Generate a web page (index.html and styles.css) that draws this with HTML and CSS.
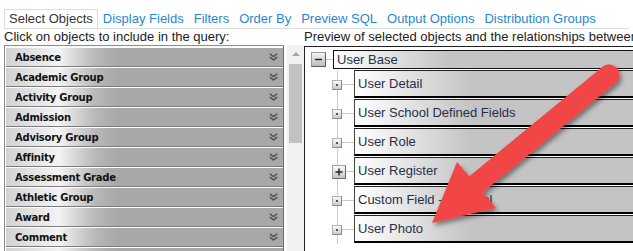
FILE: index.html
```html
<!DOCTYPE html>
<html>
  <head>
    <meta charset="utf-8">
    <meta name="viewport" content="width=device-width, initial-scale=1">

    <title>Query - Select Objects</title>
    <link rel="stylesheet" href="styles.css">
  </head>
  <body>

    <div class="tabs">
      <span class="tab active">Select Objects</span>
      <span class="tab">Display Fields</span>
      <span class="tab">Filters</span>
      <span class="tab">Order By</span>
      <span class="tab">Preview SQL</span>
      <span class="tab">Output Options</span>
      <span class="tab">Distribution Groups</span>
    </div>

    <div class="columns">

      <div class="left">
	<div class="label">Click on objects to include in the query:</div>
	<div class="list-wrap">
	  <div class="list">
	    <div class="obj">Absence<svg class="chev" width="9" height="8" viewBox="0 0 9 8"><path d="M0.8 0.8L4.5 3.6L8.2 0.8M0.8 4.2L4.5 7L8.2 4.2"/></svg></div>
	    <div class="obj">Academic Group<svg class="chev" width="9" height="8" viewBox="0 0 9 8"><path d="M0.8 0.8L4.5 3.6L8.2 0.8M0.8 4.2L4.5 7L8.2 4.2"/></svg></div>
	    <div class="obj">Activity Group<svg class="chev" width="9" height="8" viewBox="0 0 9 8"><path d="M0.8 0.8L4.5 3.6L8.2 0.8M0.8 4.2L4.5 7L8.2 4.2"/></svg></div>
	    <div class="obj">Admission<svg class="chev" width="9" height="8" viewBox="0 0 9 8"><path d="M0.8 0.8L4.5 3.6L8.2 0.8M0.8 4.2L4.5 7L8.2 4.2"/></svg></div>
	    <div class="obj">Advisory Group<svg class="chev" width="9" height="8" viewBox="0 0 9 8"><path d="M0.8 0.8L4.5 3.6L8.2 0.8M0.8 4.2L4.5 7L8.2 4.2"/></svg></div>
	    <div class="obj">Affinity<svg class="chev" width="9" height="8" viewBox="0 0 9 8"><path d="M0.8 0.8L4.5 3.6L8.2 0.8M0.8 4.2L4.5 7L8.2 4.2"/></svg></div>
	    <div class="obj">Assessment Grade<svg class="chev" width="9" height="8" viewBox="0 0 9 8"><path d="M0.8 0.8L4.5 3.6L8.2 0.8M0.8 4.2L4.5 7L8.2 4.2"/></svg></div>
	    <div class="obj">Athletic Group<svg class="chev" width="9" height="8" viewBox="0 0 9 8"><path d="M0.8 0.8L4.5 3.6L8.2 0.8M0.8 4.2L4.5 7L8.2 4.2"/></svg></div>
	    <div class="obj">Award<svg class="chev" width="9" height="8" viewBox="0 0 9 8"><path d="M0.8 0.8L4.5 3.6L8.2 0.8M0.8 4.2L4.5 7L8.2 4.2"/></svg></div>
	    <div class="obj">Comment<svg class="chev" width="9" height="8" viewBox="0 0 9 8"><path d="M0.8 0.8L4.5 3.6L8.2 0.8M0.8 4.2L4.5 7L8.2 4.2"/></svg></div>
	    <div class="obj">Conduct<svg class="chev" width="9" height="8" viewBox="0 0 9 8"><path d="M0.8 0.8L4.5 3.6L8.2 0.8M0.8 4.2L4.5 7L8.2 4.2"/></svg></div>
	  </div>
	  <div class="scrollbar">
	    <span class="up"></span>
	    <span class="thumb"></span>
	  </div>
	</div>
      </div>

      <div class="right">
	<div class="label">Preview of selected objects and the relationships between them:</div>
	<div class="preview">

	  <div class="root">
	    <span class="minus"><svg width="13" height="13" viewBox="0 0 13 13"><path d="M3 6.5H10"/></svg></span>
	    <span class="link"></span>
	    <div class="box">User Base</div>
	  </div>

	  <div class="children">
	    <div class="child">
	      <span class="branch"><span class="dot"></span><span class="hline"></span></span>
	      <div class="box">User Detail</div>
	    </div>
	    <div class="child">
	      <span class="branch"><span class="dot"></span><span class="hline"></span></span>
	      <div class="box">User School Defined Fields</div>
	    </div>
	    <div class="child">
	      <span class="branch"><span class="dot"></span><span class="hline"></span></span>
	      <div class="box">User Role</div>
	    </div>
	    <div class="child">
	      <span class="branch"><span class="plus"><svg width="12" height="12" viewBox="0 0 12 12"><path d="M2.5 6H9.5M6 2.5V9.5"/></svg></span><span class="hline"></span></span>
	      <div class="box">User Register</div>
	    </div>
	    <div class="child">
	      <span class="branch"><span class="dot"></span><span class="hline"></span></span>
	      <div class="box">Custom Field - General</div>
	    </div>
	    <div class="child">
	      <span class="branch"><span class="dot"></span><span class="hline"></span></span>
	      <div class="box">User Photo</div>
	    </div>
	  </div>

	</div>
      </div>

    </div>

    <!-- red call-out arrow drawn over the preview -->
    <svg class="callout" width="633" height="251" viewBox="0 0 633 251">
      <defs>
	<filter id="shadow" x="-20%" y="-20%" width="140%" height="140%">
	  <feDropShadow dx="2" dy="3" stdDeviation="2.5" flood-color="#000" flood-opacity="0.45"/>
	</filter>
      </defs>
      <g filter="url(#shadow)" fill="#f24545">
	<path d="M609 75L474 186" stroke="#f24545" stroke-width="21" stroke-linecap="round"/>
	<polygon points="432,223 457,162 496,208"/>
      </g>
    </svg>

  </body>
</html>
```

FILE: styles.css
```css
html,
body {
    overflow: hidden;
}

body {
    margin: 0;
    padding: 0 4px;
    background: #fff;
    color: #222;
    font-family: "Liberation Sans", Arial, sans-serif;
    font-size: 13px;
}

.tabs {
    display: flex;
    margin-top: 9px;
    border-bottom: 1px solid #dcdcdc;
    white-space: nowrap;
}

.tab {
    padding: 0 5px;
    line-height: 18px;
    margin-top: 1px;
    color: #1f88d2;
}

.tab.active {
    margin-top: 0;
    padding: 0 4px;
    border: 1px solid #dcdcdc;
    border-bottom: 0;
    color: #333;
}

.columns {
    display: flex;
}

.label {
    line-height: 16px;
    white-space: nowrap;
    color: #222;
}

.left {
    flex: none;
    width: 300px;
}

.list-wrap {
    display: flex;
    gap: 3px;
    height: 230px;
}

.list {
    width: 280px;
    box-sizing: border-box;
    border: 1px solid #8c8c8c;
    border-right-color: #6c6c6c;
    padding: 1px 0 0 1px;
    overflow: hidden;
}

.obj {
    display: flex;
    align-items: center;
    justify-content: space-between;
    height: 18px;
    padding: 0 5px 0 9px;
    border-top: 1px solid #fff;
    border-bottom: 1px solid #7c7c7c;
    background: linear-gradient(to right, #d2d2d2 0, #f3f3f3 19%, #b9b9b9 32%, #a8a8a8 40%, #a8a8a8 100%);
    font-family: "DejaVu Sans", Tahoma, sans-serif;
    font-weight: bold;
    font-size: 10px;
    letter-spacing: -0.25px;
    color: #111;
}

.chev {
    fill: none;
    stroke: #575757;
    stroke-width: 1.6;
}

.scrollbar {
    display: flex;
    flex-direction: column;
    width: 17px;
    background: #f1f1f1;
}

.scrollbar .up {
    display: flex;
    align-items: center;
    justify-content: center;
    height: 17px;
}

.scrollbar .up::before {
    content: "";
    border-left: 4px solid transparent;
    border-right: 4px solid transparent;
    border-bottom: 4px solid #a3a3a3;
}

.scrollbar .thumb {
    margin: 2px 2px 0;
    height: 79px;
    background: #c1c1c1;
}

.right {
    flex: none;
    width: 420px;
}

.preview {
    margin-top: 1px;
    height: 230px;
    border-top: 1px solid #222;
    border-left: 1px solid #222;
    padding: 3px 0 0 6px;
}

.root {
    display: flex;
    align-items: center;
}

.minus {
    display: flex;
    width: 15px;
    height: 15px;
    box-sizing: border-box;
    border: 1px solid #5c5c5c;
    border-top-color: #9a9a9a;
    border-left-color: #9a9a9a;
    background: linear-gradient(#f4f4f4, #bcbcbc);
}

.minus svg,
.plus svg {
    stroke: #222;
    stroke-width: 1.4;
}

.link {
    width: 7px;
    height: 1px;
    background: #c8c8c8;
}

.box {
    flex: 1;
    padding-left: 3px;
    background: linear-gradient(to right, #fff 0, #c4c4c4 115px, #c4c4c4 100%);
    color: #26304a;
    white-space: nowrap;
}

.root .box {
    height: 17px;
    line-height: 17px;
    border: 1px solid #111;
}

.children {
    margin: 1px 0 0 21px;
}

.child {
    display: flex;
    height: 29px;
}

.branch {
    display: flex;
    align-items: center;
    width: 22px;
    flex: none;
    background: linear-gradient(#cbcbcb, #cbcbcb) no-repeat 5px 0 / 1px 100%;
}

.dot {
    display: flex;
    align-items: center;
    justify-content: center;
    width: 10px;
    height: 10px;
    box-sizing: border-box;
    border: 1px solid #8a8a8a;
    border-top-color: #b0b0b0;
    border-left-color: #b0b0b0;
    background: linear-gradient(#fbfbfb, #c9c9c9);
}

.dot::before {
    content: "";
    width: 2px;
    height: 2px;
    background: #555;
}

.plus {
    display: flex;
    width: 14px;
    height: 14px;
    box-sizing: border-box;
    border: 1px solid #6a6a6a;
    border-top-color: #a4a4a4;
    border-left-color: #a4a4a4;
    background: linear-gradient(#fafafa, #c4c4c4);
}

.hline {
    flex: 1;
    height: 1px;
    background: #c8c8c8;
}

.child .box {
    margin-bottom: 1px;
    line-height: 25px;
    border-top: 1px solid #222;
    border-bottom: 2px solid #000;
    border-left: 1px solid #444;
}

.callout {
    position: absolute;
    top: 0;
    left: 0;
    pointer-events: none;
}
```
